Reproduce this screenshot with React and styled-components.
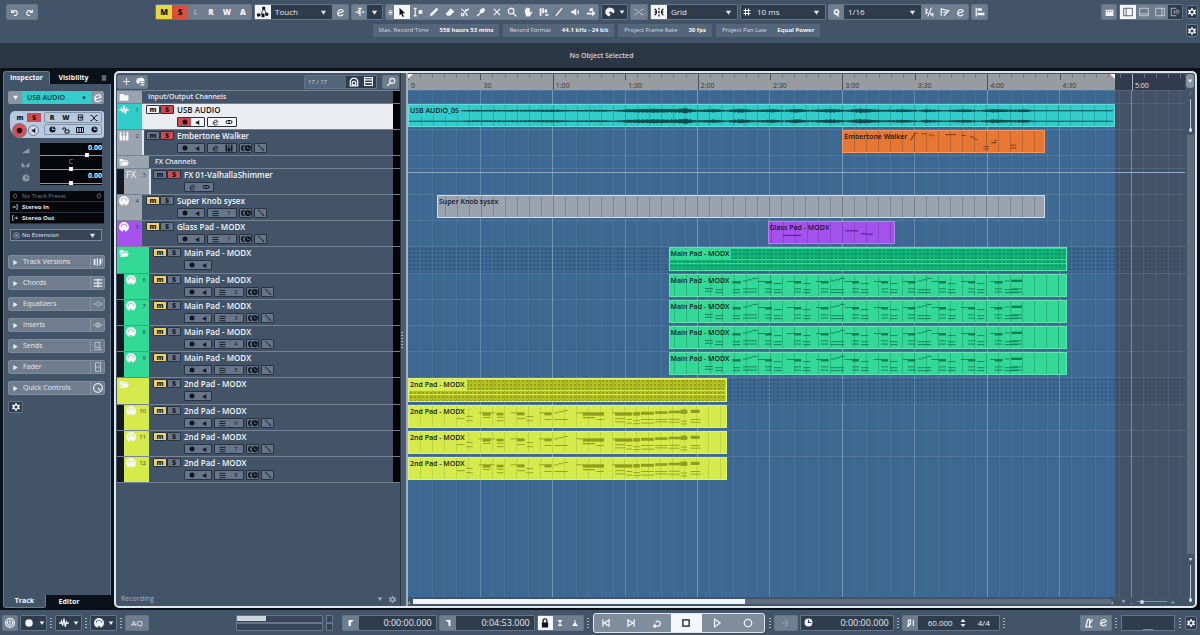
import React from "react";
import styled, { createGlobalStyle, css } from "styled-components";

const GlobalStyle = createGlobalStyle`
  * {
    box-sizing: border-box;
  }
  body {
    margin: 0;
    background: #0b1118;
    color: #e4e9ef;
    font-family: "Open Sans", "Noto Sans", sans-serif;
    font-size: 8px;
    line-height: 10px;
  }
  button, input, select {
    margin: 0;
    padding: 0;
    border: 0;
    background: none;
    color: inherit;
    font: inherit;
  }
  svg {
    display: block;
    flex: none;
  }
`;

/* ---------- icons, all on a 16 unit grid ---------- */

const strokes = {
  undo: "M3 3v5h5M3.500 8C6 3 13 4 13 9c0 3-3 5-6 4",
  redo: "M13 3v5H8M12.500 8C10 3 3 4 3 9c0 3 3 5 6 4",
  edit: "M3 10l10-4C12 1 4 2 3 8c-1 6 6 8 10 3",
  punch: "M8 2v12M1 8h4M11 8h4M5 5l3 3-3 3M5 2h6",
  range: "M1 2h5M1 14h5M3.500 2v12",
  line: "M3 14L13 2",
  cross: "M3 3l10 10M13 3L3 13",
  zoom: "M10 10l5 5M6.500 2a4.500 4.500 0 100 9 4.500 4.500 0 000-9",
  split: "M2 3l5 4M7 8l7-5M7 8l5 6M2 12a2 2 0 104 0 2 2 0 00-4 0M9 3a2 2 0 104 0",
  fade: "M1 4h3l8 8h3M1 13c3-1 4-4 5-5M10 6l5-3",
  snap: "M8 1v3M8 6v4M8 12v3M1 3c4 2 4 8 0 10M15 3c-4 2-4 8 0 10M1 8h4M11 8h4",
  hash: "M5 1v14M11 1v14M1 5h14M1 11h14",
  fraction: "M2 3l3 1-2 3 2 2-3 2M12 1L6 15M11 9v3h4M14 9v6",
  swing: "M2 2v12M2 3l12 3-8 8M5 8h5",
  auto: "M2 12h3l4-9 4 8",
  plus: "M8 2v12M2 8h12",
  menu: "M2 3h12M2 8h12M2 13h12",
  wave: "M0 8h3l1-3 2 7 2-11 2 13 2-8 1 2h3",
  link: "M5 5a3 3 0 100 6h6a3 3 0 100-6zM8 5v6",
  pen: "M2 2l3 1 9 9-1 2-9-9zM10 10l3 3",
  grid: "M1 3h14M1 8h14M1 13h14",
  camera: "M2 14V6l3-4h6l3 4v8zM5 10a3 3 0 106 0 3 3 0 00-6 0",
  list: "M1 1h14v14H1zM1 5h14M1 10h14",
  left: "M1 2h14v12H1zM5 2v12",
  bottom: "M1 2h14v12H1zM1 11h14",
  right: "M1 2h14v12H1zM11 2v12",
  extra: "M10 2H2v12h8M7 5v6M10 6a2 2 0 104 3 2 2 0 00-4-3",
  preset: "M8 2L3 8l5 6M8 2c6 1 6 11 0 12",
  refresh: "M12 5a5 5 0 11-4-2M8 0l4 3-4 3",
  input: "M1 8h7M6 5l3 3-3 3M11 2h3v12h-3",
  output: "M5 2H1v12h4M6 8h8M11 5l4 3-4 3",
  ext: "M8 1a7 7 0 100 14A7 7 0 008 1M5 6h6M5 8h6M5 10h6",
  chords: "M1 3h14M1 8h14M1 13h14M8 1v14",
  eq: "M0 8h4l4-4 4 4-4 4-4-4M12 8h4",
  insert: "M0 8h4M12 8h4M5 5h6v6H5zM8 5v6",
  send: "M3 2h8v8H3zM11 10v4M2 14h12",
  fader: "M4 1h8v14H4zM4 8h8",
  quick: "M8 1a7 7 0 100 14A7 7 0 008 1M8 8l4 4",
  open: "M1 3h14v10H1zM6 3v10M11 3v10",
  lockOpen: "M2 8V4h5v4M6 8h8v6H6z",
  eqPanel: "M3 2h10v12H3zM3 8h6M9 5v6M13 8H9",
  xPanel: "M1 3h3l8 10h3M1 13h3l8-10h3",
  skipBack: "M3 2v12M13 3v10L5 8z",
  skipForward: "M13 2v12M3 3v10l8-5z",
  cycle: "M2 13h8a4 4 0 10-4-6M2 13l4-3M2 13l4 2",
  stop: "M3 3h10v10H3z",
  play: "M4 2v12l9-6z",
  record: "M8 2a6 6 0 100 12A6 6 0 008 2",
  power: "M8 1a7 7 0 100 14A7 7 0 008 1M8 3v6M5 5a4 4 0 106 0",
  metronome: "M6 2h3v12M2 14h11M6 2L3 14M9 9l5-7",
  moon: "M6 3c6 1 6 9 0 10M2 8h5",
  search: "M7 9l-5 5M10 2a4 4 0 100 8 4 4 0 000-8",
};

const fills = {
  down: "M2 4h12l-6 9z",
  rightTri: "M3 2l10 6-10 6z",
  pointer: "M4 1l9 9H9l2 5-2 1-2-5-3 2z",
  range: "M9 5h6v6H9z",
  pencil: "M12 1l3 3-9 9-5 2 2-5z",
  eraser: "M9 2l6 5-7 7H4l-3-3z",
  glue: "M11 1l4 3-3 5-4 1-5 5-2-2 5-4V5z",
  hand: "M3 7V3h2v4V1h2v6V1h2v6V2h2v8l2-3 2 1-4 7H5z",
  comp: "M1 2h3v12H1zM5 2h3v8H5zM9 4h4v5H9zM10 11h5v3h-5z",
  speaker: "M2 6h3l5-4v12l-5-4H2zM12 5h2v6h-2z",
  speakerLeft: "M4 6h3l5-4v12L7 10H4z",
  bucket: "M1 9h9V5l5 5-5 5v-3H1zM5 3l5-2 2 4-6 2z",
  color: "M8 1a7 7 0 00-1 14l2-4-3-2 2-2 6 3c3-4 0-9-6-9z",
  auto: "M0 10h4v4H0zM7 1h4v4H7zM11 9h4v4h-4zM6 10h4v5H6z",
  align: "M1 1h2v14H1zM4 2h7v4H4zM4 9h11v4H4z",
  mixer: "M1 3h14v11H1zM3 5v2h2V5zM7 5v2h2V5zM11 5v2h2V5z",
  dot: "M8 3a5 5 0 100 10A5 5 0 008 3",
  folder: "M1 3h6l2 2h6v9H1z",
  folderOpen: "M1 3h5l2 2h6v2H4l-3 5zM5 8h11l-3 6H1z",
  keys: "M1 1h3v7h1v7H1zM6 8h1V1h2v7h1v7H6zM12 1h3v14h-4V8h1z",
  clock: "M8 1a7 7 0 100 14A7 7 0 008 1M9 3v4h4v2H7V3z",
  midi: "M8 0a8 8 0 100 16A8 8 0 008 0M3 8a5 5 0 0110 0h-1a4 4 0 00-8 0zM6 13h4v3H6z",
  freeze: "M5 3a5 5 0 100 10l1-2a3 3 0 010-6zM11 3a5 5 0 100 10 5 5 0 000-10M11 5v3h3v1h-4V5z",
  ramp: "M1 13L15 4v9z",
  pan: "M1 4l6 6v3H1zM15 4l-6 6v3h6z",
  versions: "M1 3h3v10H1zM6 2h2v12H6zM10 4l3-2v9l-3 3zM14 2h1v8h-1z",
  flagL: "M3 2h11l-6 5v7H3z",
  flagR: "M2 2h11v12H9V7z",
  lock: "M4 7V4c0-5 8-5 8 0v3h1v8H3V7zM6 7h4V4c0-2-4-2-4 0z",
  punchIn: "M3 2h10L9 7v4h3v3H4v-3h3V7z",
  punchOut: "M7 2h2v5l5 7H2l5-7z",
  note: "M3 12V3l6-1v9a2 2 0 11-2-2V5L5 6v6a2 2 0 11-2 0M12 3v11h2V3z",
  updown: "M3 6l5-6 5 6zM3 10l5 6 5-6z",
  addTrack: "M6 2a5 5 0 00-1 10h1V8h9V5C13 1 8 0 6 2M8 9h7v2H8zM8 13h7v2H8z",
  gear: "M7 0h2l1 3 2 1 3-1 1 2-2 3 2 3-1 2-3-1-2 1-1 3H7l-1-3-2-1-3 1-1-2 2-3-2-3 1-2 3 1 2-1zM8 5a3 3 0 100 6 3 3 0 000-6",
};

function Icon({ name, size = 10, weight = 2 }) {
  return (
    <svg width={size} height={size} viewBox="0 0 16 16" aria-hidden="true">
      {fills[name] && <path d={fills[name]} fill="currentColor" fillRule="evenodd" />}
      {strokes[name] && (
        <path d={strokes[name]} fill="none" stroke="currentColor" strokeWidth={weight} />
      )}
    </svg>
  );
}

/* ---------- shared controls ---------- */

const Page = styled.div`
  display: flex;
  flex-direction: column;
  min-height: 100vh;
`;

const Group = styled.div`
  display: flex;
  height: 14px;
  border-radius: 1px;
  background: #6f7d8e;
  box-shadow: 0 0 0 1px #66768a;
`;

const tones = {
  plain: css`color: #f1f4f7;`,
  dark: css`background: #2f3c4c; color: #f1f4f7;`,
  white: css`background: #f4f6f8; color: #11161c;`,
  yellow: css`background: #e6d83c; color: #17181a;`,
  red: css`background: #d9503a; color: #1c1514;`,
  dim: css`color: #939faf;`,
};

const Tool = styled.button`
  display: flex;
  align-items: center;
  justify-content: center;
  gap: 4px;
  width: ${(p) => p.$w || 16}px;
  height: 100%;
  font-weight: ${(p) => (p.$regular ? 400 : 800)};
  ${(p) => tones[p.$tone || "plain"]}
`;

const SelectBox = styled.label`
  display: grid;
  grid-template-columns: 1fr 12px;
  align-items: center;
  width: ${(p) => p.$w}px;
  height: 100%;
  background: #2f3c4c;
  color: #e4e9ef;

  select {
    grid-area: 1 / 1 / 2 / 3;
    height: 100%;
    width: 100%;
    padding-left: 4px;
    appearance: none;
    font-size: 8px;
  }
  svg {
    grid-area: 1 / 2;
    pointer-events: none;
  }
`;

function Select({ label, value, width }) {
  return (
    <SelectBox $w={width}>
      <select aria-label={label} defaultValue={value}>
        <option>{value}</option>
      </select>
      <Icon name="down" size={7} />
    </SelectBox>
  );
}

const Handle = styled.span`
  width: 2px;
  height: ${(p) => p.$h || 10}px;
  background: repeating-linear-gradient(#a9b4c1 0 1px, transparent 1px 3px);
`;

/* ---------- top bar ---------- */

const TopBar = styled.header`
  background: #435469;
  height: 43px;
  padding: 5px 2px 0 7px;
`;

const TopRow = styled.div`
  display: flex;
  justify-content: space-between;
`;

const Cluster = styled.div`
  display: flex;
  align-items: center;
  gap: 4px;
  padding-left: ${(p) => p.$pad || 0}px;
`;

const InfoRow = styled.div`
  display: flex;
  align-items: center;
  margin-top: 5px;
`;

const InfoList = styled.div`
  display: flex;
  flex: 1;
  justify-content: center;
  gap: 4px;
`;

const InfoItem = styled.span`
  display: flex;
  gap: 11px;
  height: 13px;
  padding: 0 6px;
  background: #55657a;
  color: #d5dce4;
  font-size: 6px;
  line-height: 13px;

  b {
    color: #f1f4f7;
  }
`;

const GearButton = styled.button`
  display: flex;
  align-items: center;
  justify-content: center;
  width: ${(p) => p.$w || 12}px;
  height: ${(p) => p.$h || 14}px;
  border: 1px solid #66768a;
  border-radius: 2px;
  background: #2f3c4c;
  color: #f1f4f7;
`;

const InfoLine = styled.div`
  height: 25px;
  background: #2b3644;
  color: #cdd5de;
  font-size: 7px;
  font-weight: 600;
  line-height: 26px;
  padding-left: 3px;
  text-align: center;
`;

const info = [
  ["Max. Record Time", "558 hours 53 mins"],
  ["Record Format", "44.1 kHz - 24 bit"],
  ["Project Frame Rate", "30 fps"],
  ["Project Pan Law", "Equal Power"],
];

const tools = ["range", "pencil", "eraser", "split", "glue", "cross", "zoom", "hand", "comp", "line", "speaker", "bucket"];

function Toolbar() {
  return (
    <TopBar>
      <TopRow>
        <Group>
          <Tool $w={15} aria-label="Undo"><Icon name="undo" size={9} /></Tool>
          <Tool $w={15} aria-label="Redo"><Icon name="redo" size={9} /></Tool>
        </Group>
        <Cluster $pad={4}>
          <Group>
            <Tool $tone="yellow">M</Tool>
            <Tool $tone="red">S</Tool>
            <Tool $tone="dim" $w={15}>L</Tool>
            <Tool>R</Tool>
            <Tool>W</Tool>
            <Tool>A</Tool>
          </Group>
          <Group>
            <Tool $tone="white" aria-label="Automation"><Icon name="auto" size={12} weight={1} /></Tool>
            <Select label="Automation mode" value="Touch" width={61} />
            <Tool aria-label="Automation panel"><Icon name="edit" size={9} /></Tool>
          </Group>
          <Group>
            <Tool $w={15} aria-label="Auto-scroll"><Icon name="punch" /></Tool>
            <Tool $tone="dark" $w={15} aria-label="Auto-scroll options"><Icon name="down" size={7} /></Tool>
          </Group>
          <Group>
            <Tool $w={8} aria-label="Tool buttons"><Icon name="menu" size={5} weight={3} /></Tool>
            <Tool $tone="white" aria-label="Object selection"><Icon name="pointer" /></Tool>
            {tools.map((name, i) => (
              <Tool key={name} $w={i % 3 === 2 ? 15 : 16} aria-label={name}><Icon name={name} /></Tool>
            ))}
          </Group>
          <Group>
            <Tool $tone="dark" $w={25} aria-label="Color menu">
              <Icon name="color" />
              <Icon name="down" size={6} />
            </Tool>
          </Group>
          <Group>
            <Tool aria-label="Crossfade"><Icon name="fade" weight={1} /></Tool>
          </Group>
          <Group>
            <Tool $tone="white" aria-label="Snap"><Icon name="snap" /></Tool>
            <Select label="Snap type" value="Grid" width={70} />
          </Group>
          <Group>
            <Tool $tone="dark" $w={12} aria-label="Grid type"><Icon name="hash" size={8} /></Tool>
            <Select label="Grid size" value="10 ms" width={72} />
          </Group>
          <Group>
            <Tool $w={15} aria-label="Quantize">Q</Tool>
            <Select label="Quantize preset" value="1/16" width={77} />
            <Tool aria-label="Triplet"><Icon name="fraction" /></Tool>
            <Tool $w={15} aria-label="Swing"><Icon name="swing" /></Tool>
            <Tool aria-label="Quantize panel"><Icon name="edit" size={9} /></Tool>
          </Group>
          <Group>
            <Tool $w={15} aria-label="Align"><Icon name="align" /></Tool>
          </Group>
        </Cluster>
        <Cluster>
          <Group>
            <Tool $w={14} aria-label="Mixer"><Icon name="mixer" size={9} /></Tool>
          </Group>
          <Group>
            <Tool $tone="white" aria-label="Left zone"><Icon name="left" weight={1} /></Tool>
            <Tool aria-label="Lower zone"><Icon name="bottom" weight={1} /></Tool>
            <Tool aria-label="Right zone"><Icon name="right" weight={1} /></Tool>
            <Tool $tone="dark" $w={14} aria-label="Window layout"><Icon name="extra" weight={1} /></Tool>
          </Group>
          <GearButton aria-label="Set up toolbar"><Icon name="gear" size={8} /></GearButton>
        </Cluster>
      </TopRow>
      <InfoRow>
        <InfoList>
          {info.map(([label, value]) => (
            <InfoItem key={label}>{label} <b>{value}</b></InfoItem>
          ))}
        </InfoList>
        <GearButton $h={13} aria-label="Set up status line"><Icon name="gear" size={8} /></GearButton>
      </InfoRow>
    </TopBar>
  );
}

/* ---------- inspector ---------- */

const Body = styled.main`
  display: grid;
  grid-template-columns: 108px minmax(0, 1fr);
  gap: 3px;
  flex: 1;
  padding: 3px 3px 2px;
`;

const Panel = styled.aside`
  display: flex;
  flex-direction: column;
`;

const Tabs = styled.div`
  display: flex;
  align-items: center;
  height: 13px;
  font-size: 7px;
  font-weight: 700;
`;

const Tab = styled.button`
  width: ${(p) => p.$w}px;
  height: 100%;
  background: ${(p) => (p.$active ? "#435469" : "transparent")};
  color: #f1f4f7;
  border: 0 solid #6b7a8d;
  border-width: ${(p) => (!p.$active ? "0" : p.$foot ? "0 1px 1px 1px" : "1px 1px 0 1px")};
  border-radius: ${(p) => (p.$foot ? "0 0 3px 3px" : "3px 3px 0 0")};
`;

const MenuButton = styled.button`
  margin-left: auto;
  padding-right: 4px;
`;

const PanelBody = styled.div`
  display: flex;
  flex: 1;
  flex-direction: column;
  align-items: flex-start;
  padding: 7px 6px 7px 4px;
  border: 1px solid #6b7a8d;
  border-width: 0 1px;
  background: #435469;
`;

const TrackHeader = styled.div`
  display: grid;
  grid-template-columns: 14px 1fr 13px;
  width: 100%;
  height: 13px;
  border-radius: 2px;
  overflow: hidden;
  background: #8b95a2;
`;

const TrackName = styled.span`
  display: flex;
  align-items: center;
  justify-content: space-between;
  padding: 0 4px 0 5px;
  background: #35cdcb;
  color: #14393c;
  font-size: 7px;
  font-weight: 600;
`;

const PadBlock = styled.div`
  display: grid;
  grid-template-columns: 30px 1fr;
  gap: 1px 2px;
  width: 94px;
  margin: 7px 0 0 2px;
  padding: 1px 2px;
  border-radius: 5px 3px 3px 12px;
  background: #b7c9de;
  color: #15191f;
`;

const PadRow = styled.div`
  display: flex;
  align-items: center;
  height: 11px;
  border: 1px solid ${(p) => (p.$open ? "transparent" : "#8494a8")};
  border-radius: 2px;

  button {
    display: flex;
    flex: 1;
    align-items: center;
    justify-content: center;
    height: 100%;
    font-size: 7px;
    font-weight: 800;
  }
`;

const SoloPad = styled.button`
  background: #cf4b50;
`;

const RoundButton = styled.button`
  width: ${(p) => p.$s}px;
  height: ${(p) => p.$s}px;
  border: 1px solid #6d7b8d;
  border-radius: 50%;
  background: ${(p) => (p.$red ? "#e04b50" : "#cfdbe9")};
`;

const RecordPads = styled.div`
  display: flex;
  align-items: center;
  gap: 1px;
  height: 13px;

  button {
    display: flex;
    flex: none;
    align-items: center;
    justify-content: center;
  }
`;

const Levels = styled.div`
  display: grid;
  grid-template-columns: 20px 1fr;
  gap: 0 10px;
  width: 94px;
  margin-top: 5px;
  padding-left: 2px;
  color: #8b98a8;
`;

const LevelIcon = styled.span`
  display: flex;
  align-items: center;
  justify-content: flex-end;
  height: 14px;
`;

const Level = styled.label`
  display: flex;
  flex-direction: column;
  height: 14px;
  background: #05070a;
  color: ${(p) => (p.$center ? "#8b98a8" : "#f1f4f7")};
  font-size: 7px;
  font-weight: ${(p) => (p.$center ? 400 : 700)};
  line-height: 10px;
  text-align: ${(p) => (p.$center ? "center" : "right")};

  input {
    appearance: none;
    width: 100%;
    height: 4px;
    background: linear-gradient(#8b98a8, #8b98a8) center / 100% 1px no-repeat;
  }
  input::-webkit-slider-thumb {
    appearance: none;
    width: 4px;
    height: 4px;
    background: #f4f6f8;
  }
`;

const Routing = styled.div`
  width: 94px;
  margin: 6px 0 0 2px;
`;

const Route = styled.button`
  display: flex;
  align-items: center;
  gap: 4px;
  width: 100%;
  height: 11px;
  padding: 0 2px;
  border-bottom: 1px solid #2a333f;
  background: #05070a;
  color: ${(p) => (p.$dim ? "#77818d" : "#e4e9ef")};
  font-size: 6px;
  font-weight: ${(p) => (p.$dim ? 400 : 700)};

  svg:last-child:not(:first-child) {
    margin-left: auto;
  }
`;

const Extension = styled.div`
  display: flex;
  align-items: center;
  width: 92px;
  height: 12px;
  margin: 5px 0 0 2px;
  padding-left: 2px;
  border: 1px solid #7b899a;
  background: #364456;

  label {
    flex: 1;
    background: none;
  }
  select {
    font-size: 6px;
    padding-left: 2px;
  }
`;

const Sections = styled.div`
  display: flex;
  flex-direction: column;
  gap: 7px;
  width: 97px;
  margin: 14px 0 6px;
`;

const Section = styled.button`
  display: flex;
  align-items: center;
  gap: 4px;
  height: 14px;
  padding-left: 3px;
  border: 1px solid #7e8b9a;
  border-radius: 2px;
  background: #6f7d8e;
  color: #e4e9ef;
  font-size: 7px;

  span {
    display: flex;
    align-items: center;
    justify-content: center;
    width: 14px;
    height: 100%;
    margin-left: auto;
    border-left: 1px solid #8995a3;
  }
`;

const sections = [
  ["Track Versions", "versions"],
  ["Chords", "chords"],
  ["Equalizers", "eq"],
  ["Inserts", "insert"],
  ["Sends", "send"],
  ["Fader", "fader"],
  ["Quick Controls", "quick"],
];

function Inspector() {
  return (
    <Panel>
      <Tabs>
        <Tab $w={47} $active>Inspector</Tab>
        <Tab $w={47}>Visibility</Tab>
        <MenuButton aria-label="Inspector settings"><Icon name="menu" size={6} /></MenuButton>
      </Tabs>
      <PanelBody>
        <TrackHeader>
          <Tool $w={14} aria-label="Collapse"><Icon name="down" size={7} /></Tool>
          <TrackName>USB AUDIO <Icon name="rightTri" size={5} /></TrackName>
          <Tool $w={13} aria-label="Edit channel"><Icon name="edit" size={10} /></Tool>
        </TrackHeader>
        <PadBlock>
          <PadRow $open>
            <button>m</button>
            <SoloPad>S</SoloPad>
          </PadRow>
          <PadRow>
            <button>R</button>
            <button>W</button>
            <button aria-label="Panel"><Icon name="eqPanel" size={7} /></button>
            <button aria-label="Bypass"><Icon name="xPanel" size={8} /></button>
          </PadRow>
          <RecordPads>
            <RoundButton $s={15} $red aria-label="Record enable"><Icon name="dot" size={9} /></RoundButton>
            <RoundButton $s={11} aria-label="Monitor"><Icon name="speakerLeft" size={7} /></RoundButton>
          </RecordPads>
          <PadRow>
            <button aria-label="Timebase"><Icon name="clock" size={7} /></button>
            <button aria-label="Lock"><Icon name="lockOpen" size={8} weight={2} /></button>
            <button aria-label="Lanes"><Icon name="open" size={8} /></button>
            <button aria-label="Stretch"><Icon name="clock" size={7} /></button>
          </PadRow>
        </PadBlock>
        <Levels>
          <LevelIcon><Icon name="ramp" size={9} /></LevelIcon>
          <Level>0.00<input type="range" defaultValue="78" aria-label="Volume" /></Level>
          <LevelIcon><Icon name="pan" size={9} /></LevelIcon>
          <Level $center>C<input type="range" aria-label="Pan" /></Level>
          <LevelIcon><Icon name="clock" size={8} /></LevelIcon>
          <Level>0.00<input type="range" aria-label="Delay" /></Level>
        </Levels>
        <Routing>
          <Route $dim><Icon name="preset" size={6} />No Track Preset<Icon name="refresh" size={6} /></Route>
          <Route><Icon name="input" size={6} />Stereo In</Route>
          <Route><Icon name="output" size={6} />Stereo Out</Route>
        </Routing>
        <Extension>
          <Icon name="ext" size={7} weight={1} />
          <Select label="Extension" value="No Extension" />
        </Extension>
        <Sections>
          {sections.map(([label, icon]) => (
            <Section key={label}>
              <Icon name="rightTri" size={7} />
              {label}
              <span><Icon name={icon} size={10} weight={icon === "quick" || icon === "chords" ? 2 : 1} /></span>
            </Section>
          ))}
        </Sections>
        <GearButton $w={15} $h={12} aria-label="Set up inspector"><Icon name="gear" size={8} /></GearButton>
      </PanelBody>
      <Tabs>
        <Tab $w={43} $active $foot>Track</Tab>
        <Tab $w={46}>Editor</Tab>
      </Tabs>
    </Panel>
  );
}

/* ---------- project data ---------- */

const VISIBLE = 322;
const PROJECT_END = 293;

const colors = {
  grey: "#9ba3af",
  cyan: "#31cdca",
  orange: "#e77733",
  violet: "#a551ee",
  green: "#32d997",
  lime: "#d5ea4b",
};

// note rectangles are x, y, width, height in thirds of a pixel
const padNotes = [
  [105, 45, 24, 3], [105, 54, 24, 3], [136, 49, 23, 3], [136, 59, 23, 3],
  [188, 21, 25, 8], [189, 49, 22, 3], [189, 59, 22, 3],
  [220, 19, 14, 3], [234, 15, 14, 3], [248, 10, 16, 3], [220, 46, 42, 3], [220, 57, 42, 3],
];
const padMotif = [
  [0, 21, 42, 3], [22, 21, 21, 8], [22, 46, 21, 3], [22, 57, 21, 3],
  [49, 28, 23, 3], [49, 49, 23, 3], [49, 59, 23, 3],
  [88, 21, 42, 3], [110, 21, 21, 8], [110, 46, 21, 3], [110, 57, 21, 3],
  [137, 28, 22, 3], [137, 49, 22, 3], [137, 59, 22, 3],
  [176, 21, 37, 3], [190, 21, 23, 8], [190, 46, 23, 3], [190, 57, 23, 3],
  [220, 19, 14, 3], [234, 15, 14, 3], [248, 10, 14, 3], [220, 49, 40, 3], [220, 59, 40, 3],
];
[264, 526, 788].forEach((start) => {
  padMotif.forEach(([x, y, w, h]) => {
    if (start + x < 1020) padNotes.push([start + x, y, w, h]);
  });
});
padNotes.push([1028, 16, 32, 8], [1028, 46, 32, 3], [1028, 57, 32, 3]);

const secondNotes = [
  [144, 42, 24, 3], [172, 34, 20, 3], [172, 49, 20, 3],
  [210, 22, 49, 3], [222, 23, 24, 10], [223, 38, 23, 3],
  [264, 23, 21, 9], [265, 37, 20, 3], [265, 49, 20, 3],
  [306, 22, 42, 3], [326, 23, 22, 9], [326, 42, 24, 3],
  [354, 35, 20, 3], [354, 49, 20, 3],
  [392, 22, 39, 3], [408, 23, 22, 9], [408, 45, 22, 3],
  [437, 22, 14, 3], [451, 18, 14, 3], [465, 14, 14, 3], [437, 45, 42, 3],
  [504, 22, 84, 3], [524, 23, 64, 10], [524, 38, 36, 4], [564, 45, 24, 3],
  [612, 22, 60, 3], [621, 23, 52, 10], [621, 42, 31, 3], [621, 53, 31, 3],
  [656, 45, 16, 3], [656, 57, 16, 3], [676, 21, 20, 12], [676, 49, 20, 3], [676, 59, 20, 3],
  [699, 20, 39, 10], [699, 45, 39, 3], [699, 57, 39, 3],
  [742, 18, 37, 9], [742, 45, 37, 3], [742, 53, 37, 3],
  [783, 16, 56, 9], [783, 44, 33, 3], [783, 54, 33, 3],
  [819, 12, 19, 15], [819, 50, 19, 3], [819, 60, 19, 3],
  [849, 13, 27, 11], [849, 45, 29, 3], [849, 54, 29, 3],
];

const walkerNotes = [
  [204, 26, 4, 6], [208, 18, 4, 8], [212, 12, 5, 6], [217, 7, 8, 3], [237, 8, 14, 3],
  [260, 12, 10, 3], [270, 15, 8, 3], [310, 11, 32, 3], [358, 14, 14, 3],
  [384, 18, 10, 3], [392, 23, 8, 3], [400, 28, 8, 3],
  [425, 52, 16, 3], [425, 60, 16, 3], [449, 38, 15, 4], [457, 31, 8, 3],
  [506, 47, 18, 3], [506, 57, 18, 3],
];
const glassNotes = [[42, 44, 56, 4], [232, 28, 40, 4], [280, 38, 14, 4], [294, 40, 22, 4]];

const mainPad = { name: "Main Pad - MODX", color: "green", mute: true, child: true };
const secondPad = { name: "2nd Pad - MODX", color: "lime", mute: true, child: true };
const mainEvent = { start: 108, end: 273, label: "Main Pad - MODX", notes: padNotes };
const secondEvent = { start: 0, end: 132, label: "2nd Pad - MODX", notes: secondNotes };

const tracks = [
  { kind: "section", name: "Input/Output Channels", icon: "folder" },
  {
    kind: "audio", name: "USB AUDIO", color: "cyan", icon: "wave", number: 1, solo: true, selected: true,
    event: { start: 0, end: 293, label: "USB AUDIO_05", wave: true },
  },
  {
    kind: "instrument", name: "Embertone Walker", color: "grey", icon: "keys", number: 2, solo: true,
    event: { start: 180, end: 264, label: "Embertone Walker", color: "orange", notes: walkerNotes },
  },
  { kind: "section", name: "FX Channels", icon: "folderOpen", deep: true },
  { kind: "fx", name: "FX 01-ValhallaShimmer", color: "grey", number: 3, solo: true, child: true },
  {
    kind: "midi", name: "Super Knob sysex", color: "grey", icon: "midi", number: 4, mute: true, channel: 1,
    event: { start: 12, end: 264, label: "Super Knob sysex" },
  },
  {
    kind: "midi", name: "Glass Pad - MODX", color: "violet", icon: "midi", number: 5, mute: true, channel: 1,
    event: { start: 149, end: 202, label: "Glass Pad - MODX", notes: glassNotes },
  },
  { ...mainPad, kind: "folder", event: { ...mainEvent, notes: null, folder: true } },
  ...[2, 3, 4, 5].map((channel) => ({
    ...mainPad, kind: "midi", icon: "midi", number: channel + 4, channel, event: mainEvent,
  })),
  { ...secondPad, kind: "folder", event: { ...secondEvent, notes: null, folder: true } },
  ...[6, 7, 8].map((channel) => ({
    ...secondPad, kind: "midi", icon: "midi", number: channel + 4, channel, event: secondEvent,
  })),
];

const rowHeight = (kind) => (kind === "section" ? 13 : kind === "folder" ? 27 : 26);

/* ---------- track list ---------- */

const Project = styled.section`
  display: grid;
  grid-template-columns: 284px 8px minmax(0, 1fr) 10px;
  border: 2px solid #dfe6ee;
  border-radius: 5px;
  background: #435469;
  overflow: hidden;
`;

const TrackList = styled.div`
  display: flex;
  flex-direction: column;
  padding-left: 1px;
`;

const ListBar = styled.div`
  display: flex;
  align-items: center;
  gap: 7px;
  height: 17px;
  padding: 0 2px 0 1px;
`;

const ListGroup = styled(Group)`
  height: 12px;
  margin-left: ${(p) => (p.$push ? "auto" : 0)};
`;

const Count = styled.span`
  width: 41px;
  padding-left: 3px;
  background: #55657a;
  color: #cdd5de;
  font-size: 6px;
  line-height: 12px;
`;

const Row = styled.div`
  display: flex;
  height: ${(p) => rowHeight(p.$kind)}px;
  border-top: 1px solid #748294;
`;

const Indent = styled.span`
  width: 7px;
  background: #151a20;
`;

const ColorStrip = styled.span`
  display: flex;
  align-items: flex-start;
  justify-content: space-between;
  width: ${(p) => (p.$wide ? 32 : 25)}px;
  padding: 1px 3px 0 2px;
  background: ${(p) => colors[p.$color]};
  color: #f4f6f8;
  font-size: 9px;

  small {
    color: #37444f;
    font-size: 6px;
    line-height: 10px;
  }
`;

const RowBody = styled.div`
  display: grid;
  grid-template-columns: 28px 1fr;
  grid-template-rows: 9px 10px;
  gap: 3px;
  flex: 1;
  padding: 1px 0 0 2px;
  border-left: ${(p) => (p.$line ? "2px solid #dfe6ee" : "2px solid transparent")};
  background: ${(p) => (p.$selected ? "#ecedf0" : "#435469")};
  color: ${(p) => (p.$selected ? "#14181d" : "#f1f4f7")};
`;

const SectionName = styled.span`
  flex: 1;
  padding-left: ${(p) => (p.$deep ? 6 : 0)}px;
  font-size: 7px;
  font-weight: 600;
  line-height: 12px;
`;

const Name = styled.span`
  font-size: 8px;
  font-weight: 600;
  line-height: 9px;
  white-space: nowrap;
`;

const MuteSolo = styled.div`
  display: flex;
`;

const RowButton = styled.button`
  display: flex;
  align-items: center;
  justify-content: center;
  width: 14px;
  border: 1px solid #28323e;
  border-radius: 1px;
  background: ${(p) => p.$bg || "#66758a"};
  color: #14181d;
  font-size: 7px;
  font-weight: 800;
  line-height: 7px;
`;

const RowControls = styled.div`
  display: flex;
  grid-column: 2;
  gap: 2px;
`;

const MiniGroup = styled.div`
  display: flex;
  align-items: center;
  border: 1px solid #28323e;
  border-radius: 1px;
  background: ${(p) => (p.$light ? "#f4f6f8" : "#66758a")};
  color: #11161c;

  button {
    display: flex;
    align-items: center;
    justify-content: center;
    width: ${(p) => p.$cell || 14}px;
    height: 100%;
    font-size: 6px;
  }
`;

const RecordOn = styled.button`
  background: #cf4b50;
`;

const MeterStrip = styled.span`
  width: 7px;
  background: #020304;
`;

const ListEnd = styled.hr`
  width: 100%;
  height: 1px;
  margin: 0;
  border: 0;
  background: #748294;
`;

const ListFooter = styled.div`
  display: flex;
  align-items: center;
  gap: 6px;
  height: 14px;
  margin-top: auto;
  padding: 0 4px;
  color: #a4afbc;
  font-size: 7px;

  svg:first-of-type {
    margin-left: auto;
  }
`;

function Controls({ track }) {
  const { kind, selected, channel } = track;
  return (
    <RowControls>
      {kind !== "fx" && (
        <MiniGroup $light={selected} $cell={13}>
          {selected ? (
            <RecordOn aria-label="Record enable"><Icon name="dot" size={8} /></RecordOn>
          ) : (
            <button aria-label="Record enable"><Icon name="dot" size={8} /></button>
          )}
          <button aria-label="Monitor"><Icon name="speakerLeft" size={7} /></button>
        </MiniGroup>
      )}
      {kind !== "folder" && (
        <MiniGroup $light={selected}>
          <button aria-label="Edit"><Icon name={kind === "midi" ? "grid" : "edit"} size={7} /></button>
          {kind === "midi" ? (
            <button>{channel}</button>
          ) : (
            <button aria-label="Channel"><Icon name={kind === "instrument" ? "keys" : "link"} size={8} /></button>
          )}
        </MiniGroup>
      )}
      {(kind === "midi" || kind === "instrument") && (
        <>
          <MiniGroup $cell={11}><button aria-label="Freeze"><Icon name="freeze" size={10} /></button></MiniGroup>
          <MiniGroup $cell={11}><button aria-label="Lanes"><Icon name="pen" size={8} weight={1} /></button></MiniGroup>
        </>
      )}
    </RowControls>
  );
}

function TrackRow({ track }) {
  if (track.kind === "section") {
    return (
      <Row $kind="section">
        <ColorStrip $color="grey" $wide={track.deep}><Icon name={track.icon} size={10} /></ColorStrip>
        <SectionName $deep>{track.name}</SectionName>
        <MeterStrip />
      </Row>
    );
  }
  const folder = track.kind === "folder";
  return (
    <Row $kind={track.kind}>
      {track.child && !folder && <Indent />}
      <ColorStrip $color={track.color} $wide={folder}>
        {track.kind === "fx" ? "FX" : <Icon name={folder ? "folderOpen" : track.icon} size={10} />}
        {track.number && <small>{track.number}</small>}
      </ColorStrip>
      <RowBody $selected={track.selected} $line={track.solo}>
        <MuteSolo>
          <RowButton $bg={track.mute ? "#ecd06c" : track.selected ? "#f4f6f8" : null}>m</RowButton>
          <RowButton $bg={track.solo ? "#cf4b50" : null}>S</RowButton>
        </MuteSolo>
        <Name>{track.name}</Name>
        <Controls track={track} />
      </RowBody>
      <MeterStrip />
    </Row>
  );
}

/* ---------- timeline ---------- */

const Splitter = styled.div`
  display: flex;
  align-items: center;
  border-left: 1px solid #2b3644;
  border-right: 2px solid #a3b0bf;
  background: #4d5b6e;
`;

const Timeline = styled.div`
  display: flex;
  flex-direction: column;
`;

const Ruler = styled.div`
  position: relative;
  height: 17px;
  border-top: 1px solid #435469;
  background: #303c4d;
`;

const RulerRange = styled.div`
  height: 100%;
  background: #989ba0;
`;

const Tick = styled.span`
  position: absolute;
  top: 0;
  height: ${(p) => p.$h}px;
  padding-left: 2px;
  border-left: 1px solid ${(p) => (p.$after ? (p.$h > 4 ? "#a9b4c1" : "#5c6a7b") : p.$h > 4 ? "#4c5157" : "#777b81")};
  color: ${(p) => (p.$after ? "#e4e9ef" : "#33383e")};
  font-size: 7px;
  line-height: 23px;
`;

const Locator = styled.span`
  position: absolute;
  top: 0;
  width: 5px;
  height: 5px;
  background: #f4f6f8;
  clip-path: ${(p) => (p.$end ? "polygon(0 0, 100% 0, 100% 100%)" : "polygon(0 0, 100% 0, 0 100%)")};
  transform: ${(p) => (p.$end ? "translateX(-100%)" : "none")};
`;

const Canvas = styled.div`
  position: relative;
  flex: 1;
  background: #435267;
`;

const ProjectRange = styled.div`
  position: absolute;
  inset: 0 auto 0 0;
  background: #3c6891;
`;

const GridLines = styled.svg`
  position: absolute;
  inset: 0;
  width: 100%;
  height: 100%;
`;

const Lane = styled.div`
  position: relative;
  height: ${(p) => rowHeight(p.$kind)}px;
  border-top: 1px solid #ffffff18;
  ${(p) =>
    p.$kind === "folder" &&
    css`
      background: radial-gradient(#1f3a5c55 1px, transparent 1px) 0 0 / 4px 4px;
    `}
  ${(p) =>
    p.$kind === "fx" &&
    css`
      background: linear-gradient(#8fadca, #8fadca) 0 3px / 100% 1px no-repeat;
    `}
`;

const Event = styled.div`
  position: absolute;
  top: 0;
  bottom: 2px;
  border: 1px solid ${(p) => (p.$edge ? "#d3dbe4" : "#ffffff40")};
  background: ${(p) => colors[p.$color]};
  color: #14181d;
  font-size: 7px;
  font-weight: 600;
  line-height: 11px;
  white-space: nowrap;
  overflow: hidden;
`;

const Art = styled.svg`
  position: absolute;
  inset: 0;
  width: 100%;
  height: 100%;
`;

const Texture = styled.span`
  position: absolute;
  inset: 0;
  background: radial-gradient(#00000028 1px, transparent 1px) 0 0 / 4px 4px;
`;

const Label = styled.span`
  position: relative;
  display: inline-block;
  height: 10px;
  line-height: 10px;
  padding: 0 2px 0 1px;
  background: ${(p) => (p.$color ? colors[p.$color] : "transparent")};
`;

const noteColor = { orange: "#7c3a12", violet: "#5b1fa0", green: "#0f7d54", lime: "#8f9f1c" };
const stripeColor = { green: "#10b676", lime: "#b3c01e" };

const peaks = [
  [0, 0.6], [50, 0.6], [60, 1], [110, 1], [145, 1.4], [160, 0.8], [195, 1.2], [205, 0.7], [220, 1.8],
  [245, 2.4], [265, 2], [278, 3], [288, 1], [305, 2], [318, 0.9], [332, 2.4], [345, 1], [364, 2],
  [376, 1], [388, 2.4], [400, 1], [424, 2.2], [438, 1], [452, 2.6], [475, 1], [495, 1.8], [510, 0.8],
  [518, 1.8], [535, 0.8], [558, 1.8], [570, 0.7], [585, 2], [605, 1.2], [617, 1.8], [626, 0.5], [706, 0.5],
];

function wavePath(center) {
  const top = [];
  const bottom = [];
  for (let i = 1; i < peaks.length; i++) {
    const [x0, a0] = peaks[i - 1];
    const [x1, a1] = peaks[i];
    for (let x = x0; x < x1; x += 2) {
      const amp = a0 + ((a1 - a0) * (x - x0)) / (x1 - x0);
      const rough = amp > 0.6 ? 0.8 + 0.2 * Math.sin(x * 1.7) : 1;
      top.push(`${x} ${center - amp * rough}`);
      bottom.unshift(`${x} ${center + amp * rough}`);
    }
  }
  return `M${top.join("L")}L706 ${center}L${bottom.join("L")}Z`;
}

const every = (step, from, to) => {
  const out = [];
  for (let s = Math.ceil(from / step) * step; s < to; s += step) out.push(s);
  return out;
};

const percent = (value, total = VISIBLE) => `${(value / total) * 100}%`;

function TrackEvent({ event, color }) {
  const length = event.end - event.start;
  const fill = event.color || color;
  const units = Math.round(length * 7.23);
  const faint = fill === "lime" || event.folder;
  return (
    <Event
      $color={fill}
      $edge={fill === "grey"}
      style={{ left: percent(event.start), width: percent(length) }}
    >
      {event.folder && (
        <>
          <Art>
            <rect y="1" width="100%" height="10" fill={stripeColor[fill]} />
            <rect y="12" width="100%" height="3" fill={stripeColor[fill]} />
            <rect y="16" width="100%" height="7" fill={stripeColor[fill]} />
          </Art>
          <Texture />
        </>
      )}
      <Art>
        {every(5, event.start + 1, event.end).map((s) => (
          <line
            key={s}
            x1={percent(s - event.start, length)}
            x2={percent(s - event.start, length)}
            y1="0"
            y2="100%"
            stroke="#0b2a33"
            strokeOpacity={faint ? 0.1 : s % 30 ? 0.2 : 0.28}
            shapeRendering="crispEdges"
          />
        ))}
      </Art>
      {event.wave && (
        <Art viewBox="0 0 706 22" preserveAspectRatio="none">
          <path d={wavePath(6)} fill="#0c4a4c" />
          <path d={wavePath(17)} fill="#0c4a4c" />
        </Art>
      )}
      {event.notes && (
        <Art viewBox={`0 0 ${units} 72`} preserveAspectRatio="none">
          {event.notes.map(([x, y, w, h]) => (
            <rect key={`${x}-${y}`} x={x} y={y} width={w} height={h} fill={noteColor[fill]} />
          ))}
        </Art>
      )}
      <Label $color={event.folder || event.wave ? fill : null}>{event.label}</Label>
    </Event>
  );
}

const clock = (s) => (s < 60 ? `${s}` : `${Math.floor(s / 60)}:${s % 60 ? s % 60 : "00"}`);

const HScroll = styled.div`
  display: grid;
  grid-template-columns: 5px minmax(0, 700fr) 6px 68px;
  align-items: center;
  height: 9px;
  color: #e4e9ef;
  font-size: 8px;
  line-height: 8px;
`;

const ScrollTrack = styled.div`
  height: 5px;
  background: #5f6c7c;
`;

const ScrollThumb = styled.div`
  width: 47.5%;
  height: 100%;
  background: #f1f4f7;
`;

const ZoomBox = styled.label`
  display: flex;
  align-items: center;
  gap: 4px;
  padding-left: 4px;
  color: #a9b4c1;

  input {
    appearance: none;
    width: 30px;
    height: 4px;
    background: linear-gradient(#8b98a8, #8b98a8) center / 100% 1px no-repeat;
  }
  input::-webkit-slider-thumb {
    appearance: none;
    width: 4px;
    height: 4px;
    border-radius: 50%;
    background: #cdd5de;
  }
`;

const VScroll = styled.div`
  display: flex;
  flex-direction: column;
  align-items: center;
  gap: 3px;
  padding: 1px 1px 4px;
  color: #e4e9ef;
`;

const VTop = styled.button`
  display: flex;
  align-items: center;
  justify-content: center;
  width: 8px;
  height: 14px;
  border-radius: 3px;
  background: #8592a1;
`;

const VStem = styled.span`
  width: 1px;
  height: ${(p) => p.$h}px;
  background: #b9c3ce;
`;

const VKnob = styled.span`
  width: 3px;
  height: 4px;
  margin-top: -4px;
  border-radius: 50%;
  background: #dfe6ee;
`;

const VTrack = styled.div`
  flex: 1;
  width: 7px;
  background: #5f6c7c;
`;

function Arrange() {
  return (
    <>
      <Timeline>
        <Ruler>
          <RulerRange style={{ width: percent(PROJECT_END) }} />
          {every(5, 0, VISIBLE).map((s) => (
            <Tick
              key={s}
              $h={s % 60 === 0 && s ? 16 : s % 30 === 0 ? 6 : 4}
              $after={s > PROJECT_END}
              style={{ left: percent(s) }}
            >
              {s % 30 === 0 ? clock(s) : ""}
            </Tick>
          ))}
          <Locator style={{ left: 0 }} />
          <Locator $end style={{ left: percent(PROJECT_END) }} />
        </Ruler>
        <Canvas>
          <ProjectRange style={{ width: percent(PROJECT_END) }} />
          <GridLines>
            {every(5, 1, VISIBLE).map((s) => (
              <line
                key={s}
                x1={percent(s)}
                x2={percent(s)}
                y1="0"
                y2="100%"
                stroke="#c7d6e6"
                strokeOpacity={s % 60 === 0 ? 0.42 : s % 30 === 0 ? 0.28 : 0.09}
                shapeRendering="crispEdges"
              />
            ))}
          </GridLines>
          {tracks.map((track, i) => (
            <Lane key={i} $kind={track.kind}>
              {track.event && <TrackEvent event={track.event} color={track.color} />}
            </Lane>
          ))}
        </Canvas>
        <HScroll>
          <span>‹</span>
          <ScrollTrack><ScrollThumb /></ScrollTrack>
          <span>›</span>
          <ZoomBox>
            <Icon name="down" size={5} />
            -<input type="range" defaultValue="15" aria-label="Horizontal zoom" />+
          </ZoomBox>
        </HScroll>
      </Timeline>
      <VScroll>
        <VTop aria-label="Ruler options"><Icon name="down" size={6} /></VTop>
        <Icon name="line" size={5} weight={1} />
        <VStem $h={30} />
        <VKnob />
        <VTrack />
        <Icon name="down" size={5} />
        <VStem $h={34} />
        <VKnob />
      </VScroll>
    </>
  );
}

/* ---------- transport ---------- */

const Transport = styled.footer`
  display: flex;
  align-items: center;
  gap: 4px;
  height: 25px;
  padding: 0 3px;
  background: #435469;
`;

const Spacer = styled.span`
  flex: ${(p) => p.$grow || 1};
`;

const Field = styled.input`
  width: ${(p) => p.$w}px;
  padding-right: 4px;
  background: #2f3c4c;
  color: #e4e9ef;
  font-size: ${(p) => p.$size || 9}px;
  text-align: right;
`;

const Performance = styled.div`
  display: grid;
  grid-template-columns: 1fr 7px;
  grid-template-rows: 8px 8px;
  gap: 0 3px;
  width: 97px;
  margin-right: 6px;

  span {
    border: 1px solid #66768a;
    background: #374557;
  }
`;

const Load = styled.div`
  width: 34%;
  height: 5px;
  background: #cdd5de;
`;

const PlayGroup = styled.div`
  display: flex;
  height: 20px;
  border: 1px solid #dfe6ee;
  border-radius: 3px;
  background: #808d9b;
  overflow: hidden;
`;

const OutputMeter = styled.div`
  display: flex;
  align-items: flex-end;
  justify-content: center;
  width: 54px;
  height: 16px;
  border: 1px solid #66768a;
  background: #2f3c4c;

  span {
    width: 10px;
    height: 1px;
    background: #3aa7b5;
  }
`;

function RecordMode({ icon }) {
  return (
    <>
      <Group>
        <Tool $tone="dark" $w={25} aria-label={`${icon} record mode`}>
          <Icon name={icon} size={icon === "dot" ? 12 : 10} />
          <Icon name="down" size={6} />
        </Tool>
      </Group>
      <Handle />
    </>
  );
}

function TransportBar() {
  return (
    <Transport>
      <Group><Tool $w={14} aria-label="Activate project"><Icon name="power" /></Tool></Group>
      <RecordMode icon="dot" />
      <RecordMode icon="wave" />
      <RecordMode icon="midi" />
      <Group><Tool $regular $w={22}>AQ</Tool></Group>
      <Spacer $grow={7} />
      <Performance>
        <span><Load /></span><span />
        <span /><span />
      </Performance>
      <Group>
        <Tool aria-label="Go to left locator"><Icon name="flagL" size={8} /></Tool>
        <Field $w={77} aria-label="Left locator" defaultValue="0:00:00.000" />
      </Group>
      <Group>
        <Tool aria-label="Go to right locator"><Icon name="flagR" size={8} /></Tool>
        <Field $w={78} aria-label="Right locator" defaultValue="0:04:53.000" />
      </Group>
      <Group>
        <Tool $tone="white" $w={15} aria-label="Lock punch"><Icon name="lock" /></Tool>
        <Tool $w={15} aria-label="Punch in"><Icon name="punchIn" size={8} /></Tool>
        <Tool $w={15} aria-label="Punch out"><Icon name="punchOut" size={8} /></Tool>
      </Group>
      <Handle />
      <PlayGroup>
        <Tool $w={25} aria-label="Previous marker"><Icon name="skipBack" /></Tool>
        <Tool $w={25} aria-label="Next marker"><Icon name="skipForward" /></Tool>
        <Tool $w={27} aria-label="Cycle"><Icon name="cycle" /></Tool>
        <Tool $w={31} $tone="white" aria-label="Stop"><Icon name="stop" /></Tool>
        <Tool $w={31} aria-label="Play"><Icon name="play" /></Tool>
        <Tool $w={31} aria-label="Record"><Icon name="record" /></Tool>
      </PlayGroup>
      <Handle />
      <Group><Tool $tone="dim" $w={22} aria-label="Pre-roll"><Icon name="moon" /></Tool></Group>
      <Group>
        <Tool $tone="dark" aria-label="Time format"><Icon name="clock" size={9} /></Tool>
        <Field $w={76} aria-label="Position" defaultValue="0:00:00.000" />
      </Group>
      <Handle />
      <Group>
        <Tool $w={15} aria-label="Tempo track"><Icon name="note" size={9} /></Tool>
        <Field $w={39} $size={8} aria-label="Tempo" defaultValue="60.000" />
        <Tool $tone="dark" $w={12} aria-label="Change tempo"><Icon name="updown" size={8} /></Tool>
        <Tool $tone="dark" $regular $w={30}>4/4</Tool>
      </Group>
      <Handle />
      <Spacer $grow={6} />
      <Group>
        <Tool $w={15} aria-label="Metronome"><Icon name="metronome" /></Tool>
        <Tool $w={15} aria-label="Metronome setup"><Icon name="edit" size={9} /></Tool>
      </Group>
      <Handle />
      <OutputMeter><span /></OutputMeter>
      <Handle />
      <GearButton aria-label="Set up transport"><Icon name="gear" size={8} /></GearButton>
    </Transport>
  );
}

export default function App() {
  return (
    <Page>
      <GlobalStyle />
      <Toolbar />
      <InfoLine>No Object Selected</InfoLine>
      <Body>
        <Inspector />
        <Project>
          <TrackList>
            <ListBar>
              <ListGroup>
                <Tool aria-label="Add track"><Icon name="plus" size={9} /></Tool>
                <Tool $w={13} aria-label="Track presets"><Icon name="addTrack" size={9} /></Tool>
              </ListGroup>
              <ListGroup $push>
                <Count>17 / 17</Count>
                <Tool $tone="dark" $w={15} aria-label="Visibility agents"><Icon name="camera" /></Tool>
                <Tool $tone="dark" $w={15} aria-label="Divide list"><Icon name="list" size={9} /></Tool>
              </ListGroup>
              <ListGroup>
                <Tool $w={15} aria-label="Find track"><Icon name="search" /></Tool>
              </ListGroup>
            </ListBar>
            {tracks.map((track, i) => (
              <TrackRow key={i} track={track} />
            ))}
            <ListEnd />
            <ListFooter>
              Recording
              <Icon name="down" size={6} />
              <Icon name="gear" size={7} />
            </ListFooter>
          </TrackList>
          <Splitter><Handle $h={16} /></Splitter>
          <Arrange />
        </Project>
      </Body>
      <TransportBar />
    </Page>
  );
}
